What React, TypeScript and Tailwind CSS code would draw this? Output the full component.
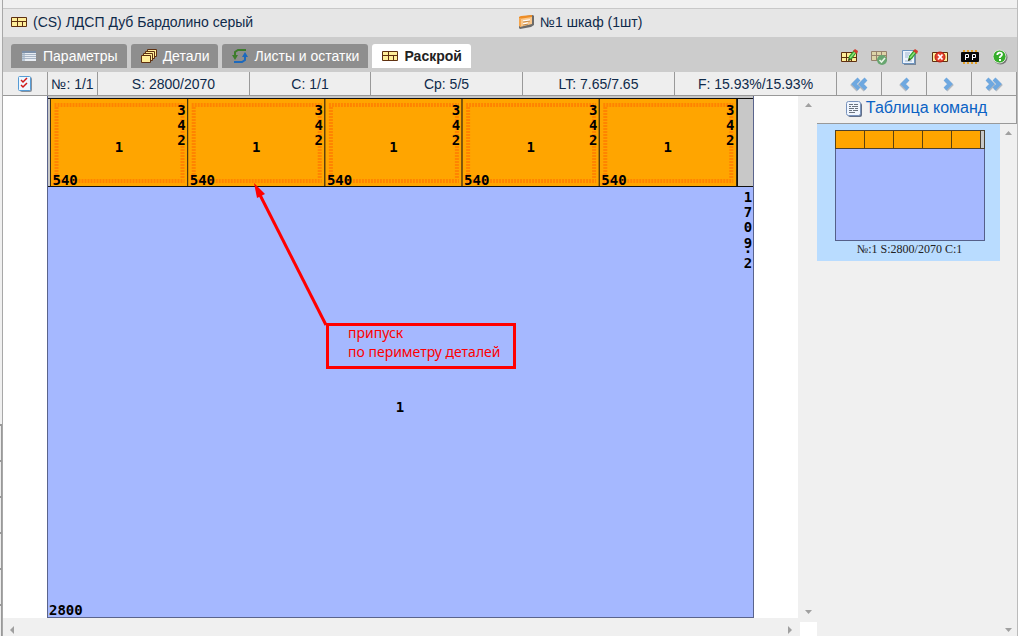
import React from "react";
import clsx from "clsx";

const PART_WIDTH = 137.2;
const parts = [0, 1, 2, 3, 4];

const stats = [
  { label: "№: 1/1", className: "basis-[50px]" },
  { label: "S: 2800/2070", className: "basis-[152px]" },
  { label: "C: 1/1", className: "basis-[121px]" },
  { label: "Cp: 5/5", className: "basis-[152px]" },
  { label: "LT: 7.65/7.65", className: "basis-[152px]" },
  { label: "F: 15.93%/15.93%", className: "basis-[162px]" },
];

const BoardIcon = () => (
  <svg width="16" height="12" viewBox="0 0 16 12" aria-hidden="true">
    <path d="M.5 1.5h15v9H.5z" fill="#ffee99" stroke="#5f3010" />
    <path d="M.5 5.5h15M6.5 1.5v9M11.5 5.5v5" stroke="#5f3010" fill="none" />
  </svg>
);

const ListIcon = () => (
  <svg width="16" height="12" viewBox="-1 0 16 12" aria-hidden="true">
    <path d="M0 1h14v10H0z" fill="#e8edf3" />
    <path d="M0 1h14v2H0z" fill="#7d90a8" />
    <path d="M0 4.500h14M0 6.500h14M0 8.500h14" stroke="#a9b6c6" strokeWidth="1" />
    <path d="M0 3h3v8H0z" fill="#9eb0c5" fillOpacity=".6" />
  </svg>
);

const StackIcon = () => (
  <svg width="16" height="14" viewBox="0 0 16 14" aria-hidden="true">
    <g fill="#ffee99" stroke="#5f3010">
      <path d="M6.5.5h9v7h-9z" />
      <path d="M4.5 2.5h9v7h-9z" />
      <path d="M2.5 4.5h9v7h-9z" />
      <path d="M.5 6.5h9v7h-9z" />
    </g>
  </svg>
);

const RecycleIcon = () => (
  <svg width="16" height="14" viewBox="0 0 16 14" aria-hidden="true">
    <path d="M14 1H6L3 3v4" fill="none" stroke="#3d7d2c" strokeWidth="2" />
    <path d="M0 6h6l-3 5z" fill="#3d7d2c" />
    <path d="M2 13h8l3-2V7" fill="none" stroke="#1c69bd" strokeWidth="2" />
    <path d="M10 8h6l-3-5z" fill="#1c69bd" />
  </svg>
);

const CabinetIcon = () => (
  <svg width="16" height="14" viewBox="0 0 16 14" aria-hidden="true">
    <path d="M1 2 15 0l1 1v9l-3 2-11 2-1-1z" fill="#6b6b6b" />
    <path d="M1 2 14 1v8L2 12z" fill="#f9c78c" />
    <path d="M1 2 3 1l11-1v2L1 4z" fill="#ee8d25" />
    <path d="M1 3h2v9l-2-1z" fill="#f5a64e" />
    <path d="M5 6l7-1M5 9l5-1" stroke="#fff" strokeWidth="1.5" />
    <path d="M5 7l7-1M5 10l5-1" stroke="#b9772f" strokeWidth=".8" />
  </svg>
);

const ChecklistIcon = () => (
  <svg width="14" height="16" viewBox="0 0 14 16" aria-hidden="true">
    <rect x="2" y="1" width="12" height="15" rx="2" fill="#89909a" />
    <rect x=".5" y=".5" width="12" height="14" rx="1" fill="#eff7ff" stroke="#569bd5" />
    <path d="m3 4 2 2 4-4M3 9l2 2 4-4" fill="none" stroke="#d01818" strokeWidth="1.5" />
  </svg>
);

const Pencil = () => (
  <>
    <path d="m7 12 1-5 5-6 3 2-5 7z" fill="#2f9e2a" />
    <path d="m9 9 5-6" stroke="#8be07a" strokeWidth="1.5" />
    <path d="m12 2 2-2 3 2-1 3z" fill="#d33c2e" />
    <path d="m7 12 1-3 2 2z" fill="#493b28" />
  </>
);

const BoardEditIcon = () => (
  <svg width="18" height="16" viewBox="0 0 18 16" aria-hidden="true">
    <path d="M.5 3.500h15v9H.5z" fill="#ffee99" stroke="#5f3010" />
    <path d="M.5 8.500h15M5.500 3.500v9M10.500 8.500v4" stroke="#5f3010" />
    <Pencil />
  </svg>
);

const BoardCheckIcon = () => (
  <svg width="18" height="16" viewBox="0 0 18 16" aria-hidden="true">
    <path d="M.5 2.500h15v9H.5z" fill="#ddd4a7" stroke="#96826d" />
    <path d="M.5 6.500h15M5.500 2.500v9M10.500 2.500v4" stroke="#96826d" />
    <circle cx="11" cy="11" r="5" fill="#68a670" />
    <path d="m8.500 11 2 2 3.500-4" fill="none" stroke="#e9f5e8" strokeWidth="1.6" />
  </svg>
);

const NoteEditIcon = () => (
  <svg width="18" height="16" viewBox="0 0 18 16" aria-hidden="true">
    <path d="M3 2h12v14H3z" fill="#788798" />
    <path d="M1.500 1.500h12v13h-12z" fill="#edf4fd" stroke="#6c93be" />
    <path d="M4 4h5M4 6h4M4 8h3M4 12h7" stroke="#9db5d0" />
    <Pencil />
  </svg>
);

const BoardDeleteIcon = () => (
  <svg width="16" height="14" viewBox="0 0 16 14" aria-hidden="true">
    <path d="M.5 2.500h15v9H.5z" fill="#ffee99" stroke="#5f3010" />
    <circle cx="8" cy="7" r="5" fill="#e2402c" stroke="#b71b12" />
    <path d="m6 4.500 4.500 5m0-5-4.500 5" stroke="#fff" strokeWidth="1.8" />
  </svg>
);

const PostProcessorIcon = () => (
  <svg width="20" height="14" viewBox="0 0 20 14" aria-hidden="true" className="shrink-0">
    <path d="M3 1h14M3 13h14" stroke="#e3a128" strokeWidth="2" strokeDasharray="2 2" />
    <rect x="1" y="2" width="18" height="10" rx="1" fill="#080808" />
    <path d="M5.500 10V4.500h3v3h-3M12.500 10V4.500h3v3h-3" fill="none" stroke="#fff" />
  </svg>
);

const HelpIcon = () => (
  <svg width="16" height="16" viewBox="0 0 16 16" aria-hidden="true">
    <circle cx="8.500" cy="8.500" r="7" fill="#777" />
    <circle cx="7.500" cy="7.500" r="6.500" fill="#35ad2a" stroke="#d6e8d1" />
    <path d="M5.300 6c0-3 4.700-3 4.700-.5C10 7 7.700 7 7.700 9" fill="none" stroke="#fff" strokeWidth="1.8" />
    <path d="M7 10h2v2H7z" fill="#fff" />
  </svg>
);

const TableIcon = () => (
  <svg width="16" height="16" viewBox="0 0 16 16" aria-hidden="true">
    <rect x="2" y="2" width="14" height="14" rx="2" fill="#62708a" />
    <rect x=".5" y=".5" width="14" height="14" rx="2" fill="#f0f6ff" stroke="#7893bd" />
    <path
      d="M3 3.500h4M8 3.500h4M3 5.500h2M6 5.500h6M3 7.500h5M9 7.500h3M3 9.500h3M7 9.500h5M3 11.500h6"
      stroke="#6b7480"
    />
  </svg>
);

const Chevron = ({ double, back }: { double?: boolean; back?: boolean }) => {
  const d = double ? "m2 2 5 5-5 5m7-10 5 5-5 5" : "m5 2 5 5-5 5";
  return (
    <svg
      width="18"
      height="16"
      viewBox="0 0 18 16"
      fill="none"
      aria-hidden="true"
      className={clsx(back && "-scale-x-100")}
    >
      <path d={d} stroke="#b4b9bf" strokeWidth="4" transform="translate(1 2)" />
      <path d={d} stroke="#6ea8e0" strokeWidth="4" transform="translate(0 1)" />
    </svg>
  );
};

const arrowPaths = {
  up: "M0 6h7L3.500 2z",
  down: "M0 2h7L3.500 6z",
  left: "M6 0v8L2 4z",
  right: "M2 0v8l4-4z",
};

const ScrollArrow = ({ dir }: { dir: keyof typeof arrowPaths }) => (
  <button
    type="button"
    aria-label={`Scroll ${dir}`}
    className={clsx("flex w-[17px] items-center justify-center", dir === "down" ? "h-3" : "h-[17px]")}
  >
    <svg width="7" height="8" viewBox="0 0 7 8" aria-hidden="true">
      <path d={arrowPaths[dir]} fill="#a0a0a0" />
    </svg>
  </button>
);

const Tab = ({ icon, title, active }: { icon: React.ReactNode; title: string; active?: boolean }) => (
  <button
    type="button"
    role="tab"
    aria-selected={!!active}
    className={clsx(
      "flex h-6 items-center gap-[6px] rounded-t-[3px] pr-[9px] pl-[10px] text-sm",
      active ? "bg-white font-bold text-[#222]" : "bg-[#8e8e8e] text-white"
    )}
  >
    {icon}
    {title}
  </button>
);

// digits of a height label, top to bottom
const VerticalLabel = ({ text, x, baselines }: { text: string; x: number; baselines: number[] }) => (
  <text textAnchor="middle">
    {text.split("").map((char, i) => (
      <tspan key={i} x={x} y={baselines[i]}>
        {char}
      </tspan>
    ))}
  </text>
);

const CuttingMap = () => (
  <svg
    width="707"
    height="522"
    viewBox="0 0 707 522"
    className="shrink-0 font-['DejaVu_Sans_Mono',monospace] text-sm font-bold"
  >
    <rect width="707" height="522" fill="#c8c8c8" />
    <rect y="91" width="707" height="431" fill="#a5b8ff" />
    {parts.map((i) => (
      <g key={i} transform={`translate(${3.5 + i * PART_WIDTH} 0)`}>
        <rect y="2.5" width={PART_WIDTH} height="88" fill="#ffa500" stroke="#3a2c10" />
        <g stroke="#ff8400" strokeWidth="4" strokeDasharray="2 1">
          <path d="M4 9h130M4 85h130M6 11v72M132 11v72" />
        </g>
        <text x="68.500" y="56" textAnchor="middle">1</text>
        <text x="2" y="89">540</text>
        <VerticalLabel text="342" x={131} baselines={[19, 34, 49]} />
      </g>
    ))}
    <path d="M0 2.500h707M0 90.500h707M690.500 2v89" stroke="#111" />
    <path d="M.5 0v522M706.500 0v522M0 521.500h707" stroke="#5a648c" />
    <VerticalLabel text="1709.2" x={701} baselines={[106, 121, 136, 152, 157, 172]} />
    <text x="353" y="316" textAnchor="middle">1</text>
    <text x="2" y="519">2800</text>

    <path d="M279 229 212 97" stroke="#f00" strokeWidth="3" />
    <path d="m207 87 11 11-8 4z" fill="#f00" />
    <rect x="280.500" y="228.500" width="187" height="43" fill="none" stroke="#f00" strokeWidth="3" />
    <g className="font-['Noto_Sans',sans-serif] text-sm font-normal" fill="#f00">
      <text x="301" y="242">припуск</text>
      <text x="301" y="261">по периметру деталей</text>
    </g>
  </svg>
);

const Thumbnail = () => (
  <svg width="150" height="111" viewBox="0 0 150 111" aria-hidden="true">
    <rect x=".5" y=".5" width="149" height="110" fill="#a5b8ff" stroke="#55608a" />
    <rect x="1" y="1" width="148" height="18" fill="#c8c8c8" />
    {parts.map((i) => (
      <rect key={i} x={0.5 + i * 29} y=".5" width="29" height="18" fill="#ffa500" stroke="#5c4310" />
    ))}
    <path d="M0 .5h150M0 18.500h150M145.500 0v19M149.500 0v19" stroke="#4a4030" />
  </svg>
);

const App: React.FC = () => {
  return (
    <div className="flex h-screen overflow-hidden bg-[#f0f0f0] font-['Liberation_Sans',Arial,sans-serif] text-sm text-[#0f2a4a]">
      <div className="flex w-[3px] shrink-0 flex-col justify-end overflow-hidden border-r border-[#a8a8a8]">
        {[0, 1, 2, 3, 4, 5].map((i) => (
          <div
            key={i}
            className="h-9 shrink-0 border-t-2 border-r border-t-[#999] border-r-[#999] bg-[#eee] last:h-8"
          />
        ))}
      </div>

      <div className="flex min-w-0 flex-1 flex-col border-r border-[#bbb]">
        <div className="h-[9px] shrink-0 border-b border-[#c8c8c8]" />
        <header className="flex h-7 shrink-0 items-center bg-[#e6e6e6] pb-[2px] pl-2">
          <div className="flex basis-[507px] items-center gap-[6px]">
            <BoardIcon />
            <span>(CS) ЛДСП Дуб Бардолино серый</span>
          </div>
          <div className="flex items-center gap-[6px]">
            <CabinetIcon />
            <span>№1 шкаф (1шт)</span>
          </div>
        </header>

        <div className="flex h-[35px] shrink-0 items-center justify-between bg-[#ccc] pr-2 pl-2">
          <div role="tablist" className="flex gap-1 pt-[3px]">
            <Tab icon={<ListIcon />} title="Параметры" />
            <Tab icon={<StackIcon />} title="Детали" />
            <Tab icon={<RecycleIcon />} title="Листы и остатки" />
            <Tab icon={<BoardIcon />} title="Раскрой" active />
          </div>
          <div className="flex gap-3 pt-1">
            {[
              { label: "Редактировать раскрой", icon: <BoardEditIcon /> },
              { label: "Принять раскрой", icon: <BoardCheckIcon /> },
              { label: "Заметка", icon: <NoteEditIcon /> },
              { label: "Удалить раскрой", icon: <BoardDeleteIcon /> },
              { label: "Постпроцессор", icon: <PostProcessorIcon /> },
              { label: "Справка", icon: <HelpIcon /> },
            ].map(({ label, icon }) => (
              <button key={label} type="button" aria-label={label} className="flex h-4 w-[18px] items-center justify-center">
                {icon}
              </button>
            ))}
          </div>
        </div>

        <div className="flex h-6 shrink-0 bg-[#eee]">
          <button
            type="button"
            aria-label="Выбрать"
            className="flex basis-[45px] items-center justify-center border-r border-b border-[#999]"
          >
            <ChecklistIcon />
          </button>
          {stats.map(({ label, className }) => (
            <div
              key={label}
              className={clsx(
                "flex grow items-center justify-center border-r border-b border-[#999] whitespace-nowrap",
                className
              )}
            >
              {label}
            </div>
          ))}
          {[
            { label: "Первый", icon: <Chevron double back /> },
            { label: "Предыдущий", icon: <Chevron back /> },
            { label: "Следующий", icon: <Chevron /> },
            { label: "Последний", icon: <Chevron double /> },
          ].map(({ label, icon }) => (
            <button
              key={label}
              type="button"
              aria-label={label}
              className="flex basis-[45px] items-center justify-center border-r border-b border-[#999]"
            >
              {icon}
            </button>
          ))}
        </div>

        <div className="flex min-h-0 flex-1">
          <main className="flex min-w-0 flex-1 flex-col">
            <div className="flex min-h-0 flex-1">
              <div className="min-w-0 flex-1 overflow-hidden bg-white pl-11">
                <CuttingMap />
              </div>
              <div className="flex w-[19px] flex-col items-end justify-between">
                <ScrollArrow dir="up" />
                <ScrollArrow dir="down" />
              </div>
            </div>
            <div className="flex h-[18px] shrink-0 items-end">
              <div className="flex h-3 flex-1 items-center justify-between">
                <ScrollArrow dir="left" />
                <ScrollArrow dir="right" />
              </div>
              <div className="ml-[2px] h-[14px] w-[17px] bg-white" />
            </div>
          </main>

          <aside className="flex w-[200px] shrink-0 flex-col">
            <button
              type="button"
              className="flex h-7 shrink-0 items-center justify-center gap-1 border-r border-b border-[#999] bg-[#f0f0f0] pb-1 text-base text-[#0a62c4]"
            >
              <span className="pt-[2px]">
                <TableIcon />
              </span>
              Таблица команд
            </button>
            <div className="flex min-h-0 flex-1">
              <div className="flex-1">
                <button
                  type="button"
                  className="flex w-full flex-col items-center bg-[#b9dcff] pt-[6px] pb-1 pl-[2px] font-['Liberation_Serif',serif] text-xs text-[#222]"
                >
                  <Thumbnail />
                  <span>№:1 S:2800/2070 C:1</span>
                </button>
              </div>
              <div className="flex w-[17px] flex-col justify-between">
                <ScrollArrow dir="up" />
                <ScrollArrow dir="down" />
              </div>
            </div>
          </aside>
        </div>
      </div>
    </div>
  );
};

export default App;
